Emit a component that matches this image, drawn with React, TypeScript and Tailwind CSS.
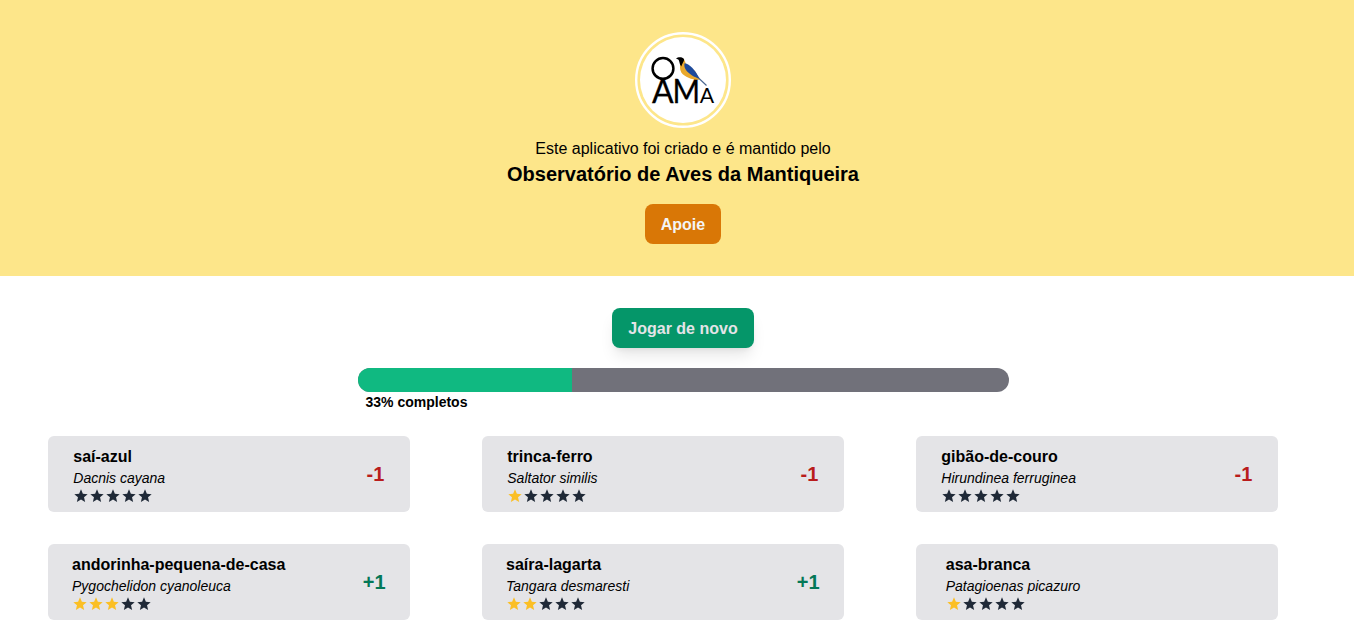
import { MdStar } from "react-icons/md";

type Bird = {
  name: string;
  scientific: string;
  stars: number;
  change?: number;
};

const birds: Bird[] = [
  { name: "saí-azul", scientific: "Dacnis cayana", stars: 0, change: -1 },
  { name: "trinca-ferro", scientific: "Saltator similis", stars: 1, change: -1 },
  { name: "gibão-de-couro", scientific: "Hirundinea ferruginea", stars: 0, change: -1 },
  { name: "andorinha-pequena-de-casa", scientific: "Pygochelidon cyanoleuca", stars: 3, change: 1 },
  { name: "saíra-lagarta", scientific: "Tangara desmaresti", stars: 2, change: 1 },
  { name: "asa-branca", scientific: "Patagioenas picazuro", stars: 1 },
];

function Logo() {
  return (
    <svg viewBox="0 0 96 96" className="h-24 w-24" role="img" aria-label="OAMa">
      <circle cx="48" cy="48" r="46.8" fill="none" stroke="#fff" strokeWidth="2.4" />
      <circle cx="48" cy="48" r="43" fill="#fff" />
      <circle cx="28" cy="36.4" r="10.4" fill="none" stroke="#000" strokeWidth="2.5" />
      <g fontFamily="Lato, sans-serif" fill="#000" stroke="#000" strokeWidth="0.3">
        <text x="17" y="70.8" fontSize="32.5" textLength="21.6" lengthAdjust="spacingAndGlyphs">A</text>
        <text x="37.6" y="70.8" fontSize="32.5" textLength="27.6" lengthAdjust="spacingAndGlyphs">M</text>
        <text x="64.8" y="70.8" fontSize="22" textLength="14.4" lengthAdjust="spacingAndGlyphs" strokeWidth="0">A</text>
      </g>
      <path d="M47 26 C50 27 50 30 51 32 L60 39 L64.8 47.7 C58 48.2 50 45.5 46.3 40.5 C44.3 37 45 33 45.5 30 Z" fill="#e9a92c" />
      <path d="M41 26.6 C43 24.8 47.5 24.6 49 27.2 C49.4 29 47.2 31 46.4 34.5 C44.2 32.5 44.8 29 43.2 27.6 Z" fill="#000" />
      <path d="M49.6 31.2 C55 32 60 38 64.8 46.8 C58 45 47.5 38.5 49.6 31.2 Z" fill="#1d4a9b" />
      <path d="M63.5 46 L71.5 53.5" stroke="#49658f" strokeWidth="1.1" />
    </svg>
  );
}

function Stars({ count }: { count: number }) {
  return (
    <div className="flex">
      {[0, 1, 2, 3, 4].map((i) => (
        <MdStar key={i} size={16} className={i < count ? "text-[#fbbf24]" : "text-[#1f2937]"} />
      ))}
    </div>
  );
}

function BirdCard({ bird }: { bird: Bird }) {
  return (
    <article className="m-4 flex w-5/6 items-center justify-around rounded-md bg-[#e4e4e7] py-2">
      <div className="w-[242.7px]">
        <h2 className="pt-0.5 leading-[22px] font-bold">{bird.name}</h2>
        <p className="text-sm italic">{bird.scientific}</p>
        <Stars count={bird.stars} />
      </div>
      <span className={`text-xl font-bold ${bird.change === 1 ? "text-[#047857]" : "text-[#b91c1c]"}`}>
        {bird.change === undefined ? "" : bird.change > 0 ? `+${bird.change}` : bird.change}
      </span>
    </article>
  );
}

export default function App() {
  return (
    <div className="h-[627px] overflow-hidden bg-white font-['Liberation_Sans',sans-serif] text-black">
      <div className="w-[1366px]">
        <header className="flex flex-col items-center bg-[#fde68a] py-8">
          <Logo />
          <p className="mt-2 pt-0.5 leading-[22px]">Este aplicativo foi criado e é mantido pelo</p>
          <h1 className="text-xl font-bold">Observatório de Aves da Mantiqueira</h1>
          <button className="mt-4 rounded-lg bg-[#d97706] px-4 pt-2.5 pb-2 leading-[22px] font-bold text-[#f4f4f5]">Apoie</button>
        </header>
        <main className="flex flex-col items-center p-8">
          <button className="rounded-lg bg-[#059669] px-4 pt-2.5 pb-2 leading-[22px] font-bold text-[#e4e4e7] shadow-lg">Jogar de novo</button>
          <div className="mt-5 w-1/2">
            <div className="h-6 overflow-hidden rounded-full bg-[#71717a]">
              <div className="h-full w-[33%] bg-[#10b981]" />
            </div>
            <p className="pl-2 text-sm font-bold">33% completos</p>
          </div>
          <section className="mt-2 grid w-full grid-cols-3">
            {birds.map((bird) => (
              <BirdCard key={bird.name} bird={bird} />
            ))}
          </section>
        </main>
      </div>
    </div>
  );
}
